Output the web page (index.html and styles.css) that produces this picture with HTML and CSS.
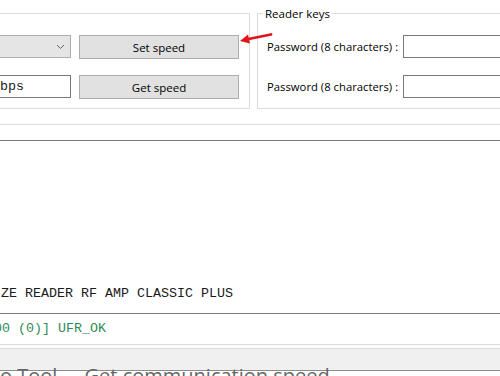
FILE: index.html
```html
<!DOCTYPE html>
<html lang="en">
<head>
  <meta charset="UTF-8">
  <title>uFR Tool - Get communication speed</title>
  <link rel="stylesheet" href="styles.css">
</head>
<body>
  <div class="page">
    <div class="groups">
      <div class="group group-speed">
        <div class="row">
          <div class="combo">
            <svg class="chevron" width="9" height="6" viewBox="0 0 9 6"><path d="M1 1 L4.5 4.5 L8 1" fill="none" stroke="#666" stroke-width="1"/></svg>
          </div>
          <button class="btn">Set speed</button>
        </div>
        <div class="row">
          <div class="textbox mono"><span class="cut">115200 bps</span></div>
          <button class="btn">Get speed</button>
        </div>
      </div>

      <div class="group group-keys">
        <span class="group-title">Reader keys</span>
        <div class="key-row">
          <label>Password (8 characters) :</label>
          <div class="textbox"></div>
        </div>
        <div class="key-row">
          <label>Password (8 characters) :</label>
          <div class="textbox"></div>
        </div>
      </div>
    </div>

    <div class="separator"></div>

    <div class="log mono">
      <div class="log-line">ZE READER RF AMP CLASSIC PLUS</div>
    </div>
    <div class="status mono">
      <span class="ok">000 (0)] UFR_OK</span>
    </div>

    <div class="footer">
      <div class="statusbar"></div>
      <div class="caption">o Tool &nbsp;-&nbsp; Get communication speed</div>
    </div>

    <!-- red pointer drawn on top of the screenshot -->
    <svg class="arrow" width="40" height="16" viewBox="0 0 40 16">
      <line x1="12.5" y1="9" x2="35" y2="4.5" stroke="#e0151a" stroke-width="2.8" stroke-linecap="round"/>
      <polygon points="4,11 12,4.5 14,13.4" fill="#e0151a"/>
    </svg>
  </div>
</body>
</html>
```

FILE: styles.css
```css
body {
  margin: 0;
  background: #fff;
  font-family: "Open Sans", "Noto Sans", sans-serif;
  font-size: 11px;
  color: #000;
}
.page {
  position: relative;
  width: 500px;
  height: 376px;
  overflow: hidden;
}
.mono {
  font-family: "Liberation Mono", "Courier New", monospace;
  font-size: 13.33px;
  color: #1a1a1a;
}

/* group boxes */
.groups {
  display: flex;
  gap: 7px;
  padding-top: 13px;
}
.group {
  border: 1px solid #dcdcdc;
  display: flex;
  flex-direction: column;
  gap: 17px;
  padding: 21px 10px 10px 0;
}
.group-speed {
  flex: 0 0 239px;
  border-left: none;
}
.group-keys {
  position: relative;
  flex: 0 0 320px;
  padding-left: 9px;
}
.group-title {
  position: absolute;
  top: -8px;
  left: 5px;
  padding: 0 2px;
  background: #fff;
  line-height: 15px;
  font-size: 11.5px;
}
.row {
  display: flex;
  gap: 8px;
  height: 23px;
}
.combo {
  position: relative;
  width: 70px;
  background: #e5e5e5;
  border: 1px solid #adadad;
  border-left: none;
}
.chevron {
  position: absolute;
  right: 5px;
  top: 8px;
}
.textbox {
  background: #fff;
  border: 1px solid #7a7a7a;
  box-sizing: border-box;
  height: 23px;
  overflow: hidden;
}
.row .textbox {
  width: 71px;
  border-left: none;
  line-height: 21px;
  white-space: nowrap;
}
.cut {
  display: inline-block;
  margin-left: -56px;
}
.btn {
  width: 160px;
  height: 24px;
  margin: 0;
  padding: 0;
  background: #e1e1e1;
  border: 1px solid #adadad;
  font-family: inherit;
  font-size: 11.5px;
  color: #000;
}
.key-row {
  display: flex;
  align-items: center;
  height: 23px;
}
.key-row label {
  width: 136px;
  flex: none;
  white-space: nowrap;
  font-size: 11.3px;
}
.key-row .textbox {
  flex: 1;
}

/* lower part */
.separator {
  margin-top: 15px;
  border-top: 1px solid #dcdcdc;
}
.log {
  margin-top: 15px;
  height: 174px;
  border-top: 1px solid #7a7a7a;
  border-bottom: 1px solid #7a7a7a;
  display: flex;
  flex-direction: column;
  justify-content: flex-end;
  padding: 0 0 12px 1px;
  box-sizing: border-box;
}
.log-line {
  line-height: 15px;
  white-space: nowrap;
}
.status {
  height: 30px;
  line-height: 30px;
  border-bottom: 1px solid #d9d9d9;
  white-space: nowrap;
}
.ok {
  display: inline-block;
  margin-left: -14px;
  color: #2e8b57;
}
.footer {
  margin-top: 3px;
  border-top: 1px solid #dcdcdc;
}
.statusbar {
  height: 21px;
  background: #f0f0f0;
  border-bottom: 1px solid #8c8c8c;
}
.caption {
  margin-top: -10px;
  font-size: 20px;
  line-height: 30px;
  color: #666;
  white-space: nowrap;
}

.arrow {
  position: absolute;
  left: 236px;
  top: 30px;
}
```
